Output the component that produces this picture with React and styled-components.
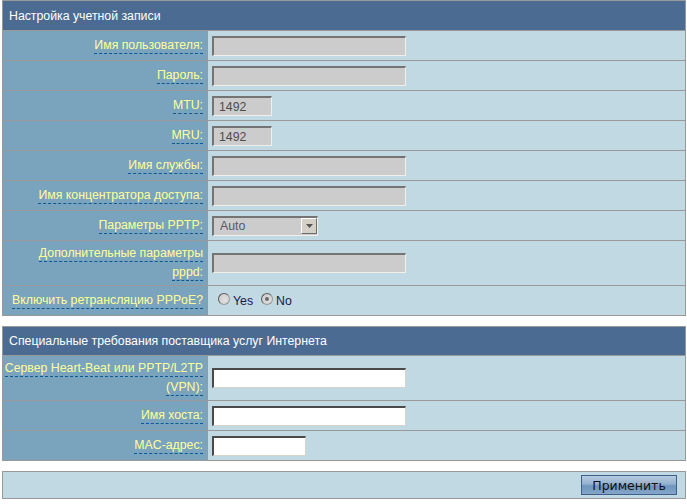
import React from "react";
import styled, { createGlobalStyle } from "styled-components";

const GlobalStyle = createGlobalStyle`
  html, body {
    margin: 0;
    padding: 0;
    background: #ffffff;
  }
  body {
    font-family: "Liberation Sans", Arial, sans-serif;
    font-size: 12.3px;
  }
`;

const Page = styled.main`
  width: 684px;
  padding: 0 0 0 2px;
  display: flex;
  flex-direction: column;
  gap: 10px;
`;

const Panel = styled.section`
  display: grid;
  grid-template-columns: 204px 1fr;
  gap: 1px;
  background: #999999;
  border: 1px solid #999999;
`;

const Header = styled.div`
  grid-column: 1 / -1;
  height: ${(p) => p.$h || 29}px;
  background: #4b6b93;
  color: #ffffff;
  display: flex;
  align-items: center;
  padding-left: 6px;
`;

const Label = styled.div`
  background: #7aa3bd;
  min-height: ${(p) => p.$h || 29}px;
  display: flex;
  align-items: center;
  justify-content: flex-end;
  text-align: right;
  padding: 0 4px 0 4px;
  line-height: 19px;
  box-sizing: border-box;
  white-space: nowrap;
`;

const Hint = styled.span`
  color: #ffff99;
  border-bottom: 1px dashed #0b5a93;
  padding-bottom: 1px;
`;

const Cell = styled.div`
  background: #c0d9e2;
  min-height: ${(p) => p.$h || 29}px;
  display: flex;
  align-items: center;
  padding-left: 4px;
  box-sizing: border-box;
`;

const Input = styled.input`
  box-sizing: border-box;
  width: ${(p) => p.$w || 194}px;
  height: 20px;
  margin: 0;
  padding: 1px 5px 0;
  font-family: "Liberation Sans", Arial, sans-serif;
  font-size: 12.3px;
  color: ${(p) => (p.$light ? "#000" : "#4d4d4d")};
  background: ${(p) => (p.$light ? "#ffffff" : "#cccccc")};
  border-style: solid;
  border-width: 2px 1px 1px 2px;
  border-color: ${(p) =>
    p.$light
      ? "#4a4a4a #d6d3cc #d6d3cc #4a4a4a"
      : "#747474 #f0efe9 #f0efe9 #747474"};
  outline: none;
`;

const Select = styled.div`
  box-sizing: border-box;
  width: 106px;
  height: 20px;
  display: flex;
  align-items: center;
  justify-content: space-between;
  background: #cccccc;
  border-style: solid;
  border-width: 2px 1px 1px 2px;
  border-color: #747474 #f0efe9 #f0efe9 #747474;
  padding-left: 6px;
  color: #555a66;
`;

const Arrow = styled.span`
  width: 16px;
  height: 16px;
  box-sizing: border-box;
  background: #d4d0c8;
  border-style: solid;
  border-width: 1px;
  border-color: #ffffff #6c6c6c #6c6c6c #ffffff;
  display: flex;
  align-items: center;
  justify-content: center;
  margin-right: 0;
`;

const Radios = styled.div`
  display: flex;
  align-items: center;
  gap: 8px;
  padding-left: 6px;
`;

const RadioItem = styled.label`
  display: flex;
  align-items: center;
  gap: 3px;
  color: #1a1a40;
`;

const Dot = styled.span`
  width: 12px;
  height: 12px;
  border-radius: 50%;
  box-sizing: border-box;
  background: radial-gradient(circle at 60% 60%, #e2e2e2 0%, #cfcfcf 70%, #b8b8b8 100%);
  border: 1px solid #9a9a9a;
  border-top-color: #5a5a5a;
  border-left-color: #5a5a5a;
  display: flex;
  align-items: center;
  justify-content: center;
  margin-top: -4px;
  &::after {
    content: "";
    width: 4px;
    height: 4px;
    border-radius: 50%;
    background: ${(p) => (p.$on ? "#6a6a6a" : "transparent")};
  }
`;

const Bar = styled.section`
  border: 1px solid #999999;
  background: #c0d9e2;
  height: 26px;
  display: flex;
  align-items: center;
  justify-content: flex-end;
  padding-right: 8px;
`;

const Button = styled.button`
  width: 96px;
  height: 20px;
  margin: 0;
  padding: 0;
  font-family: "DejaVu Sans", Verdana, sans-serif;
  font-size: 12.5px;
  color: #111;
  border: 1px solid #3c5f8c;
  background: linear-gradient(#b7cbe0 0%, #93b1cf 45%, #6f95bd 55%, #84a6c8 100%);
`;

const Field = ({ label, h, children }) => (
  <>
    <Label $h={h}>
      <div>
        <Hint>{label}</Hint>
      </div>
    </Label>
    <Cell $h={h}>{children}</Cell>
  </>
);

export default function App() {
  return (
    <Page>
      <GlobalStyle />
      <Panel>
        <Header>Настройка учетной записи</Header>
        <Field label="Имя пользователя:">
          <Input disabled />
        </Field>
        <Field label="Пароль:">
          <Input disabled />
        </Field>
        <Field label="MTU:">
          <Input disabled $w={60} defaultValue="1492" />
        </Field>
        <Field label="MRU:">
          <Input disabled $w={60} defaultValue="1492" />
        </Field>
        <Field label="Имя службы:">
          <Input disabled />
        </Field>
        <Field label="Имя концентратора доступа:">
          <Input disabled />
        </Field>
        <Field label="Параметры PPTP:">
          <Select>
            Auto
            <Arrow>
              <svg width="7" height="4" viewBox="0 0 7 4">
                <path d="M0 0h7L3.5 4z" fill="#555" />
              </svg>
            </Arrow>
          </Select>
        </Field>
        <Field
          label={
            <>
              Дополнительные параметры
              <br />
              pppd:
            </>
          }
          h={44}
        >
          <Input disabled />
        </Field>
        <Field label="Включить ретрансляцию PPPoE?">
          <Radios>
            <RadioItem>
              <Dot />
              Yes
            </RadioItem>
            <RadioItem>
              <Dot $on />
              No
            </RadioItem>
          </Radios>
        </Field>
      </Panel>

      <Panel>
        <Header $h={28}>Специальные требования поставщика услуг Интернета</Header>
        <Field
          label={
            <>
              Сервер Heart-Beat или PPTP/L2TP
              <br />
              (VPN):
            </>
          }
          h={44}
        >
          <Input $light />
        </Field>
        <Field label="Имя хоста:">
          <Input $light />
        </Field>
        <Field label="MAC-адрес:">
          <Input $light $w={94} />
        </Field>
      </Panel>

      <Bar>
        <Button>Применить</Button>
      </Bar>
    </Page>
  );
}
